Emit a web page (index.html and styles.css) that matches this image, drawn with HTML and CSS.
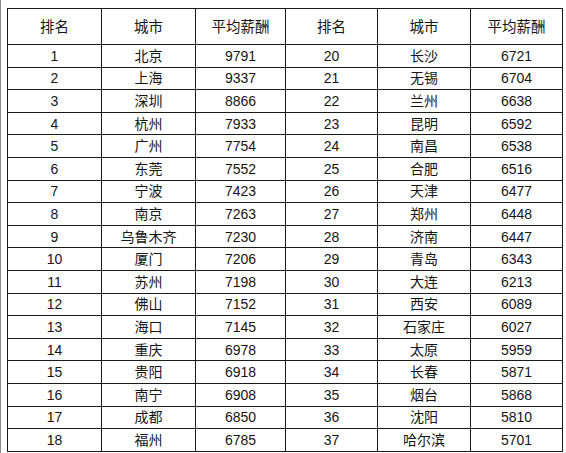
FILE: index.html
```html
<!DOCTYPE html>
<html lang="zh">
<head>
<meta charset="utf-8">
<link rel="stylesheet" href="styles.css">
</head>
<body>
<div class="page">
<table class="rank">
<colgroup>
<col class="c1"><col class="c2"><col class="c3"><col class="c4"><col class="c5"><col class="c6">
</colgroup>
<thead>
<tr><th>排名</th><th>城市</th><th>平均薪酬</th><th>排名</th><th>城市</th><th>平均薪酬</th></tr>
</thead>
<tbody>
<tr><td>1</td><td>北京</td><td>9791</td><td>20</td><td>长沙</td><td>6721</td></tr>
<tr><td>2</td><td>上海</td><td>9337</td><td>21</td><td>无锡</td><td>6704</td></tr>
<tr><td>3</td><td>深圳</td><td>8866</td><td>22</td><td>兰州</td><td>6638</td></tr>
<tr><td>4</td><td>杭州</td><td>7933</td><td>23</td><td>昆明</td><td>6592</td></tr>
<tr><td>5</td><td>广州</td><td>7754</td><td>24</td><td>南昌</td><td>6538</td></tr>
<tr><td>6</td><td>东莞</td><td>7552</td><td>25</td><td>合肥</td><td>6516</td></tr>
<tr><td>7</td><td>宁波</td><td>7423</td><td>26</td><td>天津</td><td>6477</td></tr>
<tr><td>8</td><td>南京</td><td>7263</td><td>27</td><td>郑州</td><td>6448</td></tr>
<tr><td>9</td><td>乌鲁木齐</td><td>7230</td><td>28</td><td>济南</td><td>6447</td></tr>
<tr><td>10</td><td>厦门</td><td>7206</td><td>29</td><td>青岛</td><td>6343</td></tr>
<tr><td>11</td><td>苏州</td><td>7198</td><td>30</td><td>大连</td><td>6213</td></tr>
<tr><td>12</td><td>佛山</td><td>7152</td><td>31</td><td>西安</td><td>6089</td></tr>
<tr><td>13</td><td>海口</td><td>7145</td><td>32</td><td>石家庄</td><td>6027</td></tr>
<tr><td>14</td><td>重庆</td><td>6978</td><td>33</td><td>太原</td><td>5959</td></tr>
<tr><td>15</td><td>贵阳</td><td>6918</td><td>34</td><td>长春</td><td>5871</td></tr>
<tr><td>16</td><td>南宁</td><td>6908</td><td>35</td><td>烟台</td><td>5868</td></tr>
<tr><td>17</td><td>成都</td><td>6850</td><td>36</td><td>沈阳</td><td>5810</td></tr>
<tr><td>18</td><td>福州</td><td>6785</td><td>37</td><td>哈尔滨</td><td>5701</td></tr>
</tbody>
</table>
</div>
</body>
</html>
```
FILE: styles.css
```css
html, body {
  margin: 0;
  padding: 0;
  background: #ffffff;
}
.page {
  width: 566px;
  height: 453px;
  box-sizing: border-box;
  border-left: 1px solid #8a8a8a;
  padding: 8px 0 0 6px;
  overflow: hidden;
}
.rank {
  border-collapse: collapse;
  table-layout: fixed;
  width: 555px;
  font-family: "Liberation Sans", "Noto Sans CJK SC", sans-serif;
  font-size: 14px;
  color: #151515;
}
.c1 { width: 94px; }
.c2 { width: 94px; }
.c3 { width: 90px; }
.c4 { width: 92px; }
.c5 { width: 93px; }
.c6 { width: 92px; }
.rank th,
.rank td {
  border: 1px solid #1a1a1a;
  padding: 0;
  text-align: center;
  vertical-align: middle;
  line-height: 16px;
}
.rank th {
  font-weight: normal;
  font-size: 14.5px;
  height: 35px;
}
.rank td {
  height: 21.6px;
}
```
